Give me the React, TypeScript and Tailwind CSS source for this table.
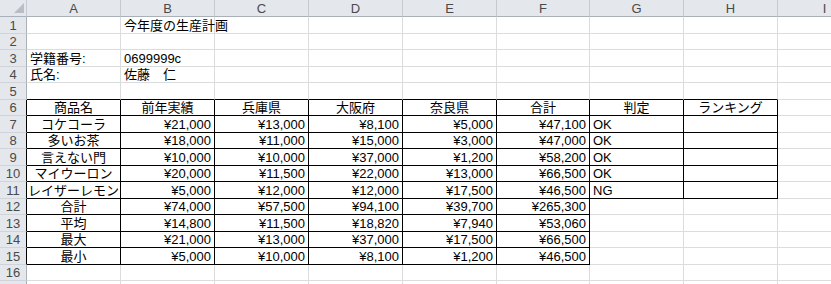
const COLS = ['A', 'B', 'C', 'D', 'E', 'F', 'G', 'H', 'I']
const COL_W = ['w-[94px]', 'w-[94px]', 'w-[94px]', 'w-[94px]', 'w-[94px]', 'w-[93px]', 'w-[94px]', 'w-[94px]', 'w-[94px]']

type Align = 'l' | 'c' | 'r'
type Cell = { t: string; a: Align }

const L = (t: string): Cell => ({ t, a: 'l' })
const C = (t: string): Cell => ({ t, a: 'c' })
const R = (t: string): Cell => ({ t, a: 'r' })

const items = [
  ['コケコーラ', '¥21,000', '¥13,000', '¥8,100', '¥5,000', '¥47,100', 'OK'],
  ['多いお茶', '¥18,000', '¥11,000', '¥15,000', '¥3,000', '¥47,000', 'OK'],
  ['言えない門', '¥10,000', '¥10,000', '¥37,000', '¥1,200', '¥58,200', 'OK'],
  ['マイウーロン', '¥20,000', '¥11,500', '¥22,000', '¥13,000', '¥66,500', 'OK'],
  ['レイザーレモン', '¥5,000', '¥12,000', '¥12,000', '¥17,500', '¥46,500', 'NG'],
]

const stats = [
  ['合計', '¥74,000', '¥57,500', '¥94,100', '¥39,700', '¥265,300'],
  ['平均', '¥14,800', '¥11,500', '¥18,820', '¥7,940', '¥53,060'],
  ['最大', '¥21,000', '¥13,000', '¥37,000', '¥17,500', '¥66,500'],
  ['最小', '¥5,000', '¥10,000', '¥8,100', '¥1,200', '¥46,500'],
]

// sheet content keyed by row number
const sheet: Record<number, (Cell | null)[]> = {
  1: [null, L('今年度の生産計画')],
  3: [L('学籍番号:'), L('0699999c')],
  4: [L('氏名:'), L('佐藤　仁')],
  6: ['商品名', '前年実績', '兵庫県', '大阪府', '奈良県', '合計', '判定', 'ランキング'].map(C),
}
items.forEach((row, i) => {
  sheet[7 + i] = [C(row[0]), ...row.slice(1, 6).map(R), L(row[6])]
})
stats.forEach((row, i) => {
  sheet[12 + i] = [C(row[0]), ...row.slice(1).map(R)]
})

function inTable(r: number, c: number) {
  if (r >= 6 && r <= 15 && c <= 5) return true
  if (r >= 6 && r <= 11 && (c === 6 || c === 7)) return true
  return false
}

export default function App() {
  const rows = Array.from({ length: 17 }, (_, i) => i + 1)
  return (
    <div className="w-[831px] h-[284px] overflow-hidden bg-white text-[13px] text-black font-['Liberation_Sans','Noto_Sans_CJK_JP',sans-serif]">
      {/* column headers */}
      <div className="flex h-[17px]">
        <div className="relative w-[27px] shrink-0 bg-[#e4e7ec] border-r border-b border-r-[#c5cad1] border-b-[#a9b0b8]">
          <svg className="absolute right-[2px] bottom-[3px]" width="10" height="10" viewBox="0 0 10 10">
            <polygon points="10,0 10,10 0,10" fill="#b8bec6" />
          </svg>
        </div>
        {COLS.map((c, i) => (
          <div
            key={c}
            className={`${COL_W[i]} shrink-0 flex items-center justify-center bg-[#e4e7ec] border-r border-b border-r-[#c5cad1] border-b-[#a9b0b8] text-[#4a4a4a] leading-none`}
          >
            {c}
          </div>
        ))}
      </div>

      {rows.map((r) => {
        const data = sheet[r] || []
        return (
          <div key={r} className={`flex ${r % 2 === 1 ? 'h-[17px]' : 'h-[16px]'}`}>
            <div
              className={`w-[27px] shrink-0 flex items-center justify-center bg-[#e4e7ec] border-r border-b border-b-[#d0d4da] text-[#4a4a4a] leading-none ${
                r >= 6 && r <= 15 ? 'border-r-black' : 'border-r-[#a9b0b8]'
              }`}
            >
              {r < 17 ? r : ''}
            </div>
            {COLS.map((c, ci) => {
              const cell = data[ci]
              const tab = inTable(r, ci)
              const right = tab || inTable(r, ci + 1) ? 'border-r-black' : 'border-r-[#dadcdd]'
              const bottom = tab || inTable(r + 1, ci) ? 'border-b-black' : 'border-b-[#dadcdd]'
              const align =
                cell?.a === 'r' ? 'justify-end pr-[3px]' : cell?.a === 'c' ? 'justify-center' : 'justify-start pl-[3px]'
              return (
                <div
                  key={c}
                  className={`${COL_W[ci]} shrink-0 flex items-end border-r border-b ${right} ${bottom} ${align} leading-[15px] whitespace-nowrap ${
                    r === 1 && ci === 1 ? 'overflow-visible relative z-10' : 'overflow-hidden'
                  }`}
                >
                  {cell?.t}
                </div>
              )
            })}
          </div>
        )
      })}
    </div>
  )
}
